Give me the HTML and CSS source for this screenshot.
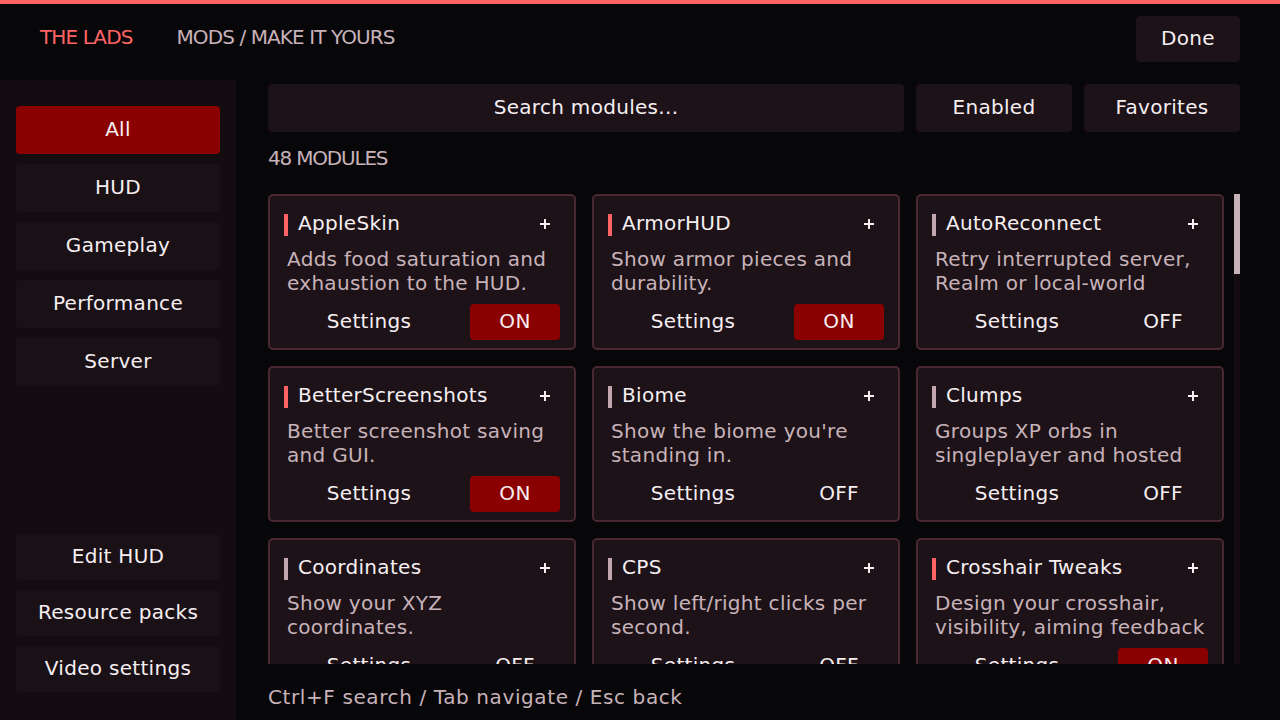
FILE: index.html
```html
<!DOCTYPE html>
<html lang="en">
<head>
<meta charset="utf-8">
<title>Mods</title>
<link rel="stylesheet" href="styles.css">
</head>
<body>
<div class="app">
  <header class="topbar">
    <div class="brand">
      <span class="brand-name">THE LADS</span>
      <span class="brand-path">MODS / MAKE IT YOURS</span>
    </div>
    <button class="btn done">Done</button>
  </header>
  <div class="body">
    <aside class="sidebar">
      <nav class="cats">
        <button class="side-btn active">All</button>
        <button class="side-btn">HUD</button>
        <button class="side-btn">Gameplay</button>
        <button class="side-btn">Performance</button>
        <button class="side-btn">Server</button>
      </nav>
      <nav class="links">
        <button class="side-btn small">Edit HUD</button>
        <button class="side-btn small">Resource packs</button>
        <button class="side-btn small">Video settings</button>
      </nav>
    </aside>
    <main class="main">
      <div class="toolbar">
        <div class="btn search">Search modules...</div>
        <button class="btn filter">Enabled</button>
        <button class="btn filter">Favorites</button>
      </div>
      <div class="count">48 MODULES</div>
      <div class="list-wrap">
        <div class="grid">
          <div class="card on">
            <div class="card-head"><span class="accent"></span><span class="title">AppleSkin</span><svg class="plus" width="10" height="10" viewBox="0 0 10 10"><rect x="4" y="0" width="2" height="10"/><rect x="0" y="4" width="10" height="2"/></svg></div>
            <p class="desc">Adds food saturation and<br>exhaustion to the HUD.</p>
            <div class="card-foot"><span class="settings">Settings</span><span class="toggle">ON</span></div>
          </div>
          <div class="card on">
            <div class="card-head"><span class="accent"></span><span class="title">ArmorHUD</span><svg class="plus" width="10" height="10" viewBox="0 0 10 10"><rect x="4" y="0" width="2" height="10"/><rect x="0" y="4" width="10" height="2"/></svg></div>
            <p class="desc">Show armor pieces and<br>durability.</p>
            <div class="card-foot"><span class="settings">Settings</span><span class="toggle">ON</span></div>
          </div>
          <div class="card">
            <div class="card-head"><span class="accent"></span><span class="title">AutoReconnect</span><svg class="plus" width="10" height="10" viewBox="0 0 10 10"><rect x="4" y="0" width="2" height="10"/><rect x="0" y="4" width="10" height="2"/></svg></div>
            <p class="desc">Retry interrupted server,<br>Realm or local-world</p>
            <div class="card-foot"><span class="settings">Settings</span><span class="toggle">OFF</span></div>
          </div>
          <div class="card on">
            <div class="card-head"><span class="accent"></span><span class="title">BetterScreenshots</span><svg class="plus" width="10" height="10" viewBox="0 0 10 10"><rect x="4" y="0" width="2" height="10"/><rect x="0" y="4" width="10" height="2"/></svg></div>
            <p class="desc">Better screenshot saving<br>and GUI.</p>
            <div class="card-foot"><span class="settings">Settings</span><span class="toggle">ON</span></div>
          </div>
          <div class="card">
            <div class="card-head"><span class="accent"></span><span class="title">Biome</span><svg class="plus" width="10" height="10" viewBox="0 0 10 10"><rect x="4" y="0" width="2" height="10"/><rect x="0" y="4" width="10" height="2"/></svg></div>
            <p class="desc">Show the biome you're<br>standing in.</p>
            <div class="card-foot"><span class="settings">Settings</span><span class="toggle">OFF</span></div>
          </div>
          <div class="card">
            <div class="card-head"><span class="accent"></span><span class="title">Clumps</span><svg class="plus" width="10" height="10" viewBox="0 0 10 10"><rect x="4" y="0" width="2" height="10"/><rect x="0" y="4" width="10" height="2"/></svg></div>
            <p class="desc">Groups XP orbs in<br>singleplayer and hosted</p>
            <div class="card-foot"><span class="settings">Settings</span><span class="toggle">OFF</span></div>
          </div>
          <div class="card">
            <div class="card-head"><span class="accent"></span><span class="title">Coordinates</span><svg class="plus" width="10" height="10" viewBox="0 0 10 10"><rect x="4" y="0" width="2" height="10"/><rect x="0" y="4" width="10" height="2"/></svg></div>
            <p class="desc">Show your XYZ<br>coordinates.</p>
            <div class="card-foot"><span class="settings">Settings</span><span class="toggle">OFF</span></div>
          </div>
          <div class="card">
            <div class="card-head"><span class="accent"></span><span class="title">CPS</span><svg class="plus" width="10" height="10" viewBox="0 0 10 10"><rect x="4" y="0" width="2" height="10"/><rect x="0" y="4" width="10" height="2"/></svg></div>
            <p class="desc">Show left/right clicks per<br>second.</p>
            <div class="card-foot"><span class="settings">Settings</span><span class="toggle">OFF</span></div>
          </div>
          <div class="card on">
            <div class="card-head"><span class="accent"></span><span class="title">Crosshair Tweaks</span><svg class="plus" width="10" height="10" viewBox="0 0 10 10"><rect x="4" y="0" width="2" height="10"/><rect x="0" y="4" width="10" height="2"/></svg></div>
            <p class="desc">Design your crosshair,<br>visibility, aiming feedback</p>
            <div class="card-foot"><span class="settings">Settings</span><span class="toggle">ON</span></div>
          </div>
        </div>
        <div class="scrollbar"><div class="thumb"></div></div>
      </div>
      <div class="hint">Ctrl+F search / Tab navigate / Esc back</div>
    </main>
  </div>
</div>
</body>
</html>
```
FILE: styles.css
```css
* { box-sizing: border-box; }

html, body {
  margin: 0;
  padding: 0;
  width: 1280px;
  height: 720px;
  overflow: hidden;
  background: #070709;
}

body {
  font-family: "DejaVu Sans", "Noto Sans", sans-serif;
  font-size: 20px;
  line-height: 24px;
  letter-spacing: 0.3px;
  color: #f6eef1;
}

button {
  font: inherit;
  letter-spacing: inherit;
  color: inherit;
  border: 0;
  margin: 0;
  padding: 0;
  cursor: pointer;
}

.app {
  width: 1280px;
  height: 720px;
  display: flex;
  flex-direction: column;
  border-top: 4px solid #ff6464;
}

/* top bar */
.topbar {
  height: 76px;
  flex: none;
  display: flex;
  align-items: flex-start;
  justify-content: space-between;
  padding: 12px 40px 0 40px;
}

.brand {
  display: flex;
  gap: 44px;
  margin-top: 9px;
  letter-spacing: -0.9px;
}

.brand-name { color: #ff6464; }
.brand-path { color: #c8b2b9; }

.btn {
  background: #1c1218;
  border-radius: 4px;
  display: flex;
  align-items: center;
  justify-content: center;
  padding-bottom: 2px;
}

.done {
  width: 104px;
  height: 46px;
}

/* body */
.body {
  flex: 1;
  display: flex;
  min-height: 0;
}

.sidebar {
  width: 236px;
  flex: none;
  background: #130c10;
  padding: 26px 16px 28px 16px;
  display: flex;
  flex-direction: column;
  justify-content: space-between;
}

.cats, .links {
  display: flex;
  flex-direction: column;
  gap: 10px;
}

.side-btn {
  height: 48px;
  background: #1a1116;
  border-radius: 4px;
  display: flex;
  align-items: center;
  justify-content: center;
  padding-bottom: 2px;
}

.side-btn.small { height: 46px; }

.side-btn.active { background: #8b0000; }

/* main */
.main {
  flex: 1;
  display: flex;
  flex-direction: column;
  padding: 4px 40px 0 32px;
  min-width: 0;
}

.toolbar {
  display: flex;
  gap: 12px;
  height: 48px;
  flex: none;
}

.search {
  flex: 1;
  height: 48px;
}

.filter {
  width: 156px;
  height: 48px;
}

.count {
  margin: 14px 0 24px 0;
  color: #c8b2b9;
  height: 24px;
  letter-spacing: -1.2px;
}

.list-wrap {
  height: 470px;
  flex: none;
  display: flex;
  overflow: hidden;
}

.grid {
  width: 956px;
  flex: none;
  display: grid;
  grid-template-columns: repeat(3, 308px);
  grid-auto-rows: 156px;
  gap: 16px;
  align-content: start;
}

.scrollbar {
  width: 6px;
  margin-left: 10px;
  background: #140c10;
  height: 100%;
}

.thumb {
  height: 80px;
  background: #c8b2b9;
}

/* card */
.card {
  background: #1c1218;
  border: 2px solid #4a2833;
  border-radius: 5px;
  padding: 18px 14px 8px 14px;
  display: flex;
  flex-direction: column;
}

.card-head {
  height: 22px;
  display: flex;
  align-items: flex-start;
}

.accent {
  width: 4px;
  height: 22px;
  background: #c2a7b0;
  flex: none;
}

.card.on .accent { background: #ff6464; }

.title {
  margin-left: 10px;
  line-height: 18px;
  white-space: nowrap;
}

.plus {
  margin-left: auto;
  margin-right: 10px;
  margin-top: 5px;
  fill: #f6eef1;
  flex: none;
}

.desc {
  margin: 11px 0 0 0;
  padding-left: 3px;
  height: 48px;
  color: #c8b2b9;
  white-space: nowrap;
  overflow: hidden;
}

.card-foot {
  margin-top: 9px;
  height: 36px;
  display: flex;
  align-items: center;
}

.settings {
  width: 90px;
  margin-left: 40px;
  text-align: center;
  padding-bottom: 2px;
}

.toggle {
  margin-left: auto;
  width: 90px;
  height: 36px;
  display: flex;
  align-items: center;
  justify-content: center;
  padding-bottom: 2px;
  border-radius: 4px;
}

.card.on .toggle { background: #8b0000; }

.hint {
  margin-top: 21px;
  color: #c8b2b9;
  letter-spacing: 0.6px;
}
```
